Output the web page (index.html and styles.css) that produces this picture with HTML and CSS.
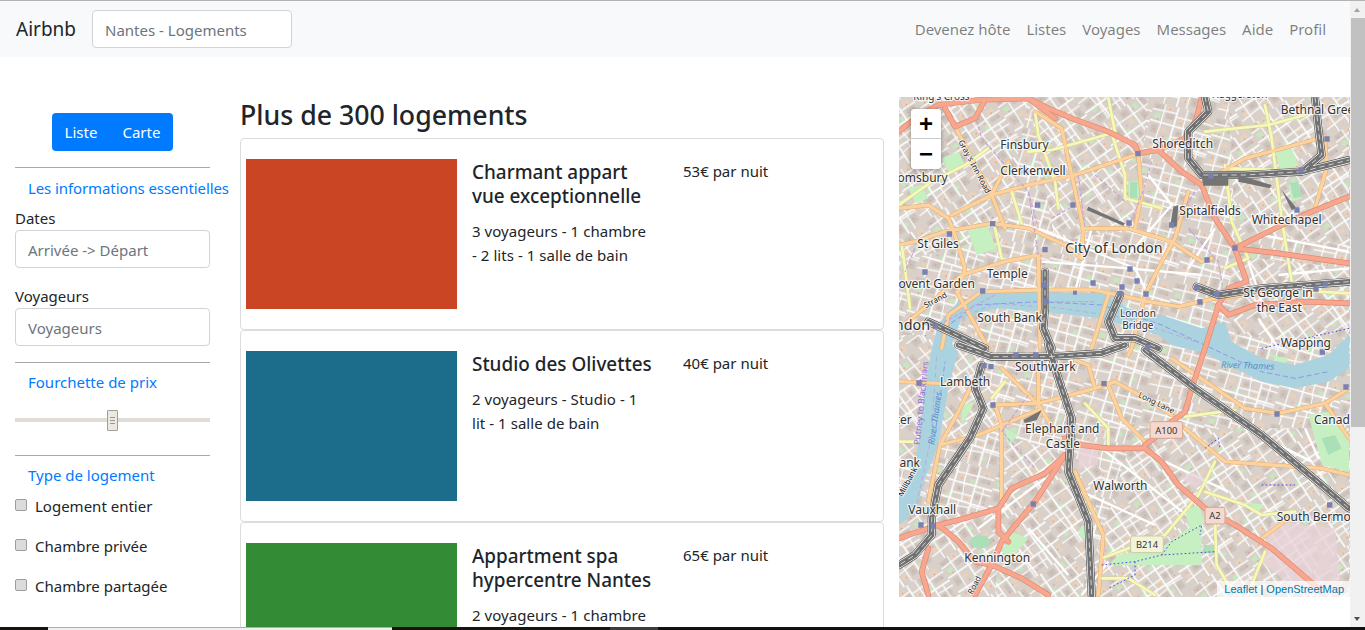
FILE: index.html
```html
<!DOCTYPE html>
<html lang="fr">
<head>
<meta charset="utf-8">
<title>Airbnb</title>
<link rel="stylesheet" href="styles.css">
</head>
<body>
<div class="shell">
  <div class="window-line"></div>
  <div class="viewport">
    <div class="page">
      <nav class="navbar">
        <a class="brand">Airbnb</a>
        <input class="field nav-search" placeholder="Nantes - Logements">
        <ul class="nav-links">
          <li>Devenez hôte</li><li>Listes</li><li>Voyages</li><li>Messages</li><li>Aide</li><li>Profil</li>
        </ul>
      </nav>
      <main class="main">
        <aside class="sidebar">
          <div class="btn-wrap">
            <div class="btn-group"><span>Liste</span><span>Carte</span></div>
          </div>
          <hr class="rule rule-first">
          <h2 class="filter-title">Les informations essentielles</h2>
          <label class="label label-first">Dates</label>
          <input class="field" placeholder="Arrivée -&gt; Départ">
          <label class="label label-next">Voyageurs</label>
          <input class="field" placeholder="Voyageurs">
          <hr class="rule">
          <h2 class="filter-title filter-title-tight">Fourchette de prix</h2>
          <div class="slider"><div class="handle"><i></i><i></i><i></i></div></div>
          <hr class="rule rule-after-slider">
          <h2 class="filter-title filter-title-tight">Type de logement</h2>
          <div class="checks">
            <label class="check"><input type="checkbox" class="box"><span>Logement entier</span></label>
            <label class="check"><input type="checkbox" class="box"><span>Chambre privée</span></label>
            <label class="check"><input type="checkbox" class="box"><span>Chambre partagée</span></label>
          </div>
        </aside>
        <section class="listing">
          <h1 class="listing-title">Plus de 300 logements</h1>
          <article class="card">
            <div class="thumb thumb-red"></div>
            <div class="card-text">
              <h3>Charmant appart vue exceptionnelle</h3>
              <p>3 voyageurs - 1 chambre - 2 lits - 1 salle de bain</p>
            </div>
            <div class="price">53€ par nuit</div>
          </article>
          <article class="card">
            <div class="thumb thumb-blue"></div>
            <div class="card-text">
              <h3>Studio des Olivettes</h3>
              <p>2 voyageurs - Studio - 1 lit - 1 salle de bain</p>
            </div>
            <div class="price">40€ par nuit</div>
          </article>
          <article class="card">
            <div class="thumb thumb-green"></div>
            <div class="card-text">
              <h3>Appartment spa hypercentre Nantes</h3>
              <p>2 voyageurs - 1 chambre - 1 lit - 1 salle de bain</p>
            </div>
            <div class="price">65€ par nuit</div>
          </article>
        </section>
        <section class="map">
          <svg class="map-art" viewBox="12 6 1353 1500" aria-hidden="true">
            <defs>
              <g id="tile">
                <rect width="190" height="170" class="m-base"/>
                <path class="m-tone1" d="M4 4h30v14H4zM44 24h26v18H44zM112 6h24v22h-24zM150 34h30v14h-30zM8 66h20v26H8zM84 70h26v16H84zM142 84h36v16h-36zM40 116h30v18H40zM108 128h20v30h-20zM156 130h26v24h-26z"/>
                <path class="m-tone2" d="M42 4h20v12H42zM84 34h16v16H84zM152 8h24v16h-24zM38 70h18v14H38zM118 92h14v20h-14zM10 128h20v16H10zM76 140h22v14H76z"/>
                <path class="m-tone3" d="M10 32h18v14H10zM120 44h14v12h-14zM60 96h16v12H60zM136 138h12v12h-12z"/>
                <path class="m-street" d="M0 56L190 62M0 108L190 118M76 0L68 170M140 0L134 170"/>
                <path class="m-lane" d="M0 22L76 20M76 30H140M140 28L190 30M36 0L34 56M104 0L102 60M34 57L30 106M104 60L108 114M72 92H136M136 76L190 80M30 107L28 170M0 146L70 142M70 132L136 128M100 116L98 170M136 122L190 126M160 120L158 170M165 62L162 118"/>
                <path class="m-dots" d="M14 14h.1M22 50h.1M52 12h.1M60 36h.1M92 46h.1M124 16h.1M130 36h.1M164 22h.1M176 44h.1M18 80h.1M50 96h.1M92 78h.1M122 104h.1M150 92h.1M174 108h.1M18 122h.1M52 126h.1M90 150h.1M118 146h.1M168 142h.1"/>
              </g>
              <pattern id="blocksA" width="190" height="170" patternUnits="userSpaceOnUse" patternTransform="rotate(14)"><use href="#tile"/></pattern>
              <pattern id="blocksB" width="190" height="170" patternUnits="userSpaceOnUse" patternTransform="rotate(-36) translate(37 21)"><use href="#tile"/></pattern>
              <pattern id="blocksC" width="190" height="170" patternUnits="userSpaceOnUse" patternTransform="rotate(52) translate(71 93)"><use href="#tile"/></pattern>
              <g id="trunk">
                <path d="M12 110L60 70 130 30 250 15 400 10 460 40 530 70 640 110 720 150 730 175 790 165 870 130 905 70 920 6"/>
                <path d="M150 40L180 95 240 70 270 15M400 10L480 70"/>
                <path d="M790 165L860 230 920 270 960 370 1020 460 1055 560 1000 580 970 630 1000 660 1080 630 1240 620 1362 625"/>
                <path d="M1020 460L1150 395 1250 350 1362 305M1020 460L1150 475 1362 505"/>
                <path d="M970 630L930 760 900 850 870 950 830 980 790 1020 750 1050"/>
                <path d="M510 1030L560 1050 640 1060 750 1060 800 1100 850 1170 930 1240 1020 1290 1130 1360 1200 1420 1280 1490"/>
                <path d="M510 1080L450 1135 350 1180 310 1240 210 1270 130 1290 70 1310 12 1330"/>
                <path d="M510 1080L420 1220 320 1340 290 1410 240 1500M290 1410L380 1450 460 1500M130 1290L190 1340 240 1400 290 1410M100 1360L80 1430 100 1500M310 1240V1310L340 1340"/>
              </g>
              <g id="primary">
                <path d="M12 450L60 440 150 410 290 385 400 400 510 450 560 490M170 360L290 300 400 270 540 240 720 180M12 340L100 330 160 370 180 420 210 520 190 590"/>
                <path d="M180 95L290 300 330 400M340 200L290 300M420 50L500 100 530 240 565 400 560 490M730 180L740 300 720 400"/>
                <path d="M560 400L700 400 830 440 920 500 950 490M880 290L840 430 800 500 750 600 710 760 700 780"/>
                <path d="M12 700L100 630 200 540 330 500 430 480M140 760L160 660 260 590 430 585 600 585 760 620 850 635 960 610 1050 600"/>
                <path d="M430 480L435 760M185 590L280 760M640 600L590 760M980 230L1050 190 1200 150 1290 125 1295 220 1260 340"/>
                <path d="M12 860L135 865 240 865M300 930L430 925 600 880 660 860 770 920 830 960M320 820L430 930 480 1010M430 800V930M600 880L580 810 540 795M640 870L680 970 750 1040"/>
                <path d="M300 930L320 990V1220M135 1050L250 1020 370 970 430 945M135 1050L100 1220M135 1050L190 950 230 870M540 1130L625 1320 610 1500"/>
                <path d="M870 1000L990 1100 1130 1110 1280 1120 1362 1140M830 790L1050 940 1150 955 1290 925 1362 880M1290 925L1362 1030M1100 1330L1180 1270"/>
              </g>
              <g id="secondary">
                <path d="M12 330L110 260 210 210 280 160M400 170L470 165 650 115 690 240 690 310 800 340M420 50L430 120 480 260 490 340M640 10L660 110M350 290L380 385"/>
                <path d="M1110 30L1130 130 1160 370 1190 560M930 110L1120 90 1230 60M990 210L1010 380 1060 490 990 520M1000 220L1140 225M1270 590L1362 595M20 450L30 520 45 640M300 400L320 490"/>
                <path d="M570 925L640 1000V1050M330 860L290 910M870 965L1020 945M960 1100L910 1200 810 1320 620 1390M930 1190L1050 1230 1100 1260 1200 1250M960 1280L965 1410 1000 1470M1110 1370L1070 1470M620 1450H700L780 1500M12 1040H60"/>
              </g>
              <g id="rail">
                <path d="M930 6L940 50 880 110V190L920 240H1050L1220 230 1280 180 1270 100 1260 6M1220 230L1362 195"/>
                <path d="M905 575L970 600 1100 580 1362 560M450 530V640L445 700 470 760M675 600L640 680 660 730H720L790 760"/>
                <path d="M100 680L270 760M190 750L290 785H460L620 775 690 750M460 750L490 850 530 970 520 1130 580 1280 590 1500"/>
                <path d="M260 810L240 880 265 940 225 1030 130 1170 110 1270V1320L60 1380 12 1410M750 765L900 880 1100 1020 1280 1170 1362 1240"/>
              </g>
            </defs>
            <rect x="12" y="6" width="1353" height="1500" fill="url(#blocksA)"/>
            <path fill="url(#blocksB)" d="M12 6H400L330 420 12 500ZM720 1000L1362 1000V1506H560ZM12 1250H400L300 1506H12ZM1000 6H1362V450L1020 420Z"/>
            <path fill="url(#blocksC)" d="M400 6H760L720 400 480 440ZM1000 480L1362 520V760L1020 720ZM330 1020L620 1120 560 1506H300ZM12 720H240L320 1000 12 1100Z"/>
            <path class="m-arterial" d="M430 400L720 520 760 600M440 500L700 520 920 540M590 400L540 590M960 400L880 520M760 240L830 330 700 480M1060 500L1100 620M1100 420L1362 470M1150 540L1362 520M1090 670L1150 760M520 800L620 760M560 1190L780 1290M620 1060L900 1280M810 1100L1000 1190M250 1300L450 1150M400 1300L520 1440M640 1400L560 1500M1050 1000L1250 1100M1230 1000L1270 1090"/>
            <path class="m-park" d="M140 190l50-20 20 40-50 20zM40 280l40-10 20 40-40 15zM215 400l60-10 30 70-60 20zM1140 170l50-10 20 50-50 20zM1180 270l30-10 10 50-30 10zM700 260l30-5 5 60-30 5zM870 1250l40-20 20 50-40 40zM810 1350l110-80v140H640l30-30zM350 1310l50 20-50 60-30-20zM1240 960l60-10 62 90v90l-80-20zM200 930l40-10-40 70zM330 1000l40 20-30 30zM560 1290l30 10-10 40-30-20zM1050 1220l60 10-20 20zM1130 780l50 10-20 30z"/>
            <path class="m-park-dark" d="M225 1340a30 20 0 1 0 60 0a30 20 0 1 0-60 0zM925 1350h40v25h-40zM705 260h22v50h-22zM1185 265l25-5 10 45-25 5zM1280 1030l40-10 20 40-40 20z"/>
            <path class="m-pinkzone" d="M1130 1280L1320 1300 1340 1500H1220L1100 1400ZM550 1040H610V1110L550 1120ZM890 1130L930 1150 900 1180 860 1150Z"/>
            <path class="m-water" d="M12 1210L50 1130 70 1050 90 880 110 760 135 680 190 620 290 590 430 590 620 595 700 640 800 660 920 700 990 680 1010 740 1100 790 1200 810 1300 780 1362 720V820L1300 860 1200 880 1100 860 1000 810 930 775 830 750 790 720 620 670 440 650 300 640 200 670 170 750 190 770 160 880 130 1050 90 1150 60 1250 12 1290Z"/>
            <path class="m-ferry" d="M150 700L240 630 430 620 620 630 800 690 950 760 1100 830 1200 850 1300 830M120 1020L150 800"/>
            <path class="m-ferry2" d="M170 680L300 625 500 640 700 670 900 740M60 1250L110 1020 125 780"/>
            <use href="#secondary" class="s-secondary-case"/>
            <use href="#primary" class="s-primary-case"/>
            <use href="#secondary" class="s-secondary"/>
            <use href="#primary" class="s-primary"/>
            <path class="m-cycle" d="M240 60L260 130 400 290 430 480M400 290L430 400M550 240L570 400M600 240L690 320M770 200L740 300 700 400M900 290L830 400M880 400L970 500 985 590M400 900L320 1010 420 1120M460 620H600M130 690L300 600M470 370L540 330M60 460L30 530"/>
            <use href="#trunk" class="s-trunk-case"/>
            <use href="#trunk" class="s-trunk"/>
            <path class="m-pathblue" d="M620 1410L720 1400 800 1380 960 1370M720 1400V1440L640 1480M800 1380L830 1340 920 1290 915 1320M930 1060L970 1030 975 1060M1100 760L1362 700M1100 1170H1200M1310 1260H1362"/>
            <use href="#rail" class="s-rail-edge"/>
            <use href="#rail" class="s-rail-white"/>
            <use href="#rail" class="s-rail-grey"/>
            <use href="#rail" class="s-rail-dash"/>
            <path class="m-railyard" d="M920 245H1000V272H925ZM835 335L850 330 845 395H825ZM385 975L440 945 425 975 390 985ZM1160 285L1205 340 1190 345ZM580 335L690 385 685 392 575 345ZM1030 240L1130 270 1125 280 1030 260Z"/>
            <path class="m-station" d="M420 322h16v16h-16zM526 322h16v16h-16zM285 378h16v16h-16zM155 409h16v16h-16zM82 523h16v16H82zM255 580h16v16h-16zM442 456h16v16h-16zM439 562h16v16h-16zM445 610h16v16h-16zM114 685h16v16h-16zM586 556h16v16h-16zM673 568h16v16h-16zM667 588h16v16h-16zM718 550h16v16h-16zM697 514h16v16h-16zM745 589h16v16h-16zM694 376h16v16h-16zM822 382h16v16h-16zM721 168h16v16h-16zM940 235h16v16h-16zM1210 217h16v16h-16zM1288 124h16v16h-16zM1198 337h16v16h-16zM1012 451h16v16h-16zM928 487h16v16h-16zM898 570h16v16h-16zM958 589h16v16h-16zM907 613h16v16h-16zM1255 574h16v16h-16zM1282 559h16v16h-16zM534 587h12v12h-12zM750 749h16v16h-16zM355 772h16v16h-16zM414 772h16v16h-16zM259 804h16v16h-16zM280 807h16v16h-16zM64 856h16v16H64zM286 922h16v16h-16zM619 858h16v16h-16zM1274 763h16v16h-16zM1345 868h16v16h-16zM1138 949h16v16h-16zM1296 1222h16v16h-16zM407 1219h16v16h-16zM70 1282h16v16H70zM106 1285h16v16h-16z"/>
            <g class="m-labels">
              <text x="55" y="14" class="l-small">King's Cross</text>
              <text x="950" y="10" class="l-small">Haggerston</text>
              <text x="316" y="163">Finsbury</text>
              <text x="316" y="241">Clerkenwell</text>
              <text x="772" y="160">Shoreditch</text>
              <text x="158" y="260" text-anchor="end">Bloomsbury</text>
              <text x="853" y="361">Spitalfields</text>
              <text x="1070" y="386">Whitechapel</text>
              <text x="67" y="459">St Giles</text>
              <text x="510" y="473" class="l-big">City of London</text>
              <text x="275" y="549">Temple</text>
              <text x="240" y="580" text-anchor="end">Covent Garden</text>
              <text x="1157" y="57">Bethnal Green</text>
              <text x="1045" y="605">St George in</text>
              <text x="1085" y="651">the East</text>
              <text x="247" y="682">South Bank</text>
              <text x="105" y="705" text-anchor="end" class="l-big">London</text>
              <text x="675" y="665" class="l-small">London</text>
              <text x="682" y="701" class="l-small">Bridge</text>
              <text x="1157" y="757">Wapping</text>
              <text x="360" y="827">Southwark</text>
              <text x="135" y="872">Lambeth</text>
              <text x="50" y="986" text-anchor="end">Westminster</text>
              <text x="390" y="1013">Elephant and</text>
              <text x="452" y="1060">Castle</text>
              <text x="595" y="1185">Walworth</text>
              <text x="40" y="1258">Vauxhall</text>
              <text x="208" y="1402">Kennington</text>
              <text x="1145" y="1279">South Bermondsey</text>
              <text x="1257" y="987">Canada Water</text>
              <text x="75" y="1116" text-anchor="end">Millbank</text>
              <text class="l-road" transform="translate(190 140) rotate(62)">Gray's Inn Road</text>
              <text class="l-road" transform="translate(92 640) rotate(-28)">Strand</text>
              <text class="l-road" transform="translate(728 905) rotate(26)">Long Lane</text>
              <text class="l-road" transform="translate(22 1207) rotate(-62)">Millbank</text>
              <text class="l-road" transform="translate(232 1500) rotate(-62)">Road</text>
              <text class="l-river" transform="translate(978 818) rotate(2)">River Thames</text>
              <text class="l-river" transform="translate(118 1050) rotate(-82)">River Thames</text>
              <text class="l-ferry" transform="translate(74 1050) rotate(-84)">Putney to Blackfriars</text>
            </g>
            <g class="m-shields">
              <rect class="sh-red" x="765" y="980" width="98" height="50" rx="6"/>
              <text x="814" y="1016">A100</text>
              <rect class="sh-red" x="930" y="1237" width="60" height="50" rx="6"/>
              <text x="960" y="1273">A2</text>
              <rect class="sh-yel" x="707" y="1323" width="98" height="50" rx="6"/>
              <text x="756" y="1359">B214</text>
            </g>
          </svg>
          <div class="zoom">
            <button class="zoom-btn">+</button>
            <button class="zoom-btn">−</button>
          </div>
          <div class="attribution"><a>Leaflet</a> | <a>OpenStreetMap</a></div>
        </section>
      </main>
    </div>
    <div class="scrollbar">
      <div class="arrow-up"></div>
      <div class="thumb-bar"></div>
      <div class="arrow-down"></div>
    </div>
  </div>
  <div class="taskbar">
    <span class="t-black t-a"></span><span class="t-light"></span><span class="t-black t-b"></span><span class="t-mid"></span><span class="t-black t-c"></span>
  </div>
</div>
</body>
</html>
```

FILE: styles.css
```css
* { box-sizing: border-box; }
html, body { margin: 0; height: 100%; overflow: hidden; }
body {
  font-family: "Noto Sans", "Open Sans", "Liberation Sans", sans-serif;
  font-size: 15px;
  line-height: 24px;
  color: #212529;
  background: #fff;
}
.shell { height: 630px; display: flex; flex-direction: column; }
.window-line { height: 1px; background: #b4b2b4; flex: none; }
.viewport { flex: 1; min-height: 0; display: flex; }
.page { width: 1350px; flex: none; overflow: hidden; }

.navbar {
  height: 56px; background: #f8f9fa;
  display: flex; align-items: center; padding: 0 16px;
}
.brand { font-size: 19px; margin-right: 16px; line-height: 30px; }
.field {
  display: block; width: 100%; height: 38px;
  padding: 7px 12px 5px; border: 1px solid #ced4da; border-radius: 4px;
  font: inherit; color: #495057; background: #fff; outline: 0;
}
.field::placeholder { color: #6c757d; opacity: 1; }
.nav-search { width: 200px; }
.nav-links {
  list-style: none; margin: 0 0 0 auto; padding: 0; display: flex;
  color: rgba(0,0,0,.5); letter-spacing: -.02px;
}
.nav-links li { padding: 8px; }

.main { display: flex; padding-top: 40px; }
.sidebar { width: 195px; margin: 16px 30px 0 15px; flex: none; }
.btn-wrap { display: flex; justify-content: center; }
.btn-group {
  display: flex; background: #007bff; color: #fff; border-radius: 4px;
  height: 38px; align-items: center;
}
.btn-group span { padding: 0 12.5px; }
.rule { border: 0; border-top: 1px solid #a9a9a9; margin: 16px 0 0; }
.filter-title {
  font: inherit; color: #007bff; margin: 8px 0 0; padding-left: 13px;
  white-space: nowrap; letter-spacing: -.1px;
}
.filter-title-tight { margin-top: 7px; letter-spacing: 0; }
.label { display: block; }
.label-first { margin-top: 6px; }
.label-next { margin-top: 16px; }
.slider {
  position: relative; height: 4px; background: #e1dcd5; margin-top: 24px;
}
.handle {
  position: absolute; left: 92px; top: -8px; width: 11px; height: 21px;
  background: #ece9e4; border: 1px solid #a39d94; border-radius: 1px;
  display: flex; flex-direction: column; justify-content: center; gap: 2px; padding: 0 2px;
}
.handle i { display: block; height: 1px; background: #9c978f; }
.rule-after-slider { margin-top: 33px; }
.checks { margin-top: 7px; display: flex; flex-direction: column; gap: 16px; }
.check { display: flex; align-items: flex-start; height: 24px; }
.check span { margin-left: 8px; }
.box {
  appearance: none; width: 12px; height: 12px; margin: 5px 0 0;
  background: #dcdcdc; border: 1px solid #9d9d9d; border-radius: 2px; flex: none;
}

.listing { width: 644px; flex: none; }
.listing-title {
  font-size: 26.7px; font-weight: 500; line-height: 34px; margin: 1px 0 6px;
  white-space: nowrap;
}
.card {
  height: 192px; border: 1px solid #dcdcdc; border-radius: 4px;
  padding: 20px 5px; display: flex; background: #fff;
}
.thumb { width: 211px; height: 150px; flex: none; }
.thumb-red { background: #c94524; }
.thumb-blue { background: #1c6c8c; }
.thumb-green { background: #348b36; }
.card-text { width: 180px; margin-left: 15px; flex: none; padding-top: 1px; }
.card-text h3 { font-size: 18.9px; font-weight: 500; line-height: 24px; margin: 0 0 11px; }
.card-text p { margin: 0; letter-spacing: .05px; }
.price { margin-left: 31px; }

.map {
  position: relative; width: 451px; height: 500px; margin-left: 15px; flex: none;
  overflow: hidden; background: #ddd;
}
.map-art { display: block; width: 451px; height: 500px; }
.zoom {
  position: absolute; left: 12px; top: 12px; width: 30px;
  background: #fff; border-radius: 4px; overflow: hidden;
  box-shadow: 0 1px 5px rgba(0,0,0,.4);
}
.zoom-btn {
  display: block; width: 30px; height: 30px; padding: 0; border: 0;
  border-bottom: 1px solid #ccc; background: #fff; color: #000;
  font: bold 24px/30px "Liberation Sans", Arial, sans-serif;
}
.zoom-btn:last-child { border-bottom: 0; }
.attribution {
  position: absolute; right: 0; bottom: 0; padding: 0 6px 0 7px; height: 16px;
  background: rgba(255,255,255,.7); color: #333;
  font: 11px/16px "Liberation Sans", Arial, sans-serif;
}
.attribution a { color: #0078a8; }

/* map art */
.m-base { fill: #d8d0c9; }
.m-tone1 { fill: #cbc3bc; }
.m-tone2 { fill: #e6d2bf; }
.m-tone3 { fill: #c6e8bf; }
.m-street { fill: none; stroke: #fff; stroke-width: 5; }
.m-lane { fill: none; stroke: #fff; stroke-width: 3.5; }
.m-dots { fill: none; stroke: #e98a7c; stroke-width: 4; stroke-linecap: round; }
.m-arterial { fill: none; stroke: #fff; stroke-width: 7; }
.m-park { fill: #c6f0c2; }
.m-park-dark { fill: #aadfb8; }
.m-pinkzone { fill: #e8d3da; opacity: .8; }
.m-water { fill: #aad3df; }
.m-ferry { fill: none; stroke: #7a7be8; stroke-width: 2.5; stroke-dasharray: 16 8; opacity: .8; }
.m-ferry2 { fill: none; stroke: #c39bd6; stroke-width: 2.5; stroke-dasharray: 14 10; opacity: .9; }
.m-cycle { fill: none; stroke: #c8a3d6; stroke-width: 3.5; stroke-dasharray: 12 6; }
.m-pathblue { fill: none; stroke: #2a2ae8; stroke-width: 2.5; stroke-dasharray: 5 7; }
#trunk, #primary, #secondary, #rail { fill: none; stroke-linejoin: round; stroke-linecap: round; }
.s-trunk-case { stroke: #dd8a72; stroke-width: 17; }
.s-trunk { stroke: #f9a68e; stroke-width: 13; }
.s-primary-case { stroke: #e5ac6c; stroke-width: 13; }
.s-primary { stroke: #fcd29f; stroke-width: 10; }
.s-secondary-case { stroke: #d6d68c; stroke-width: 11; }
.s-secondary { stroke: #f6f9b8; stroke-width: 8; }
.s-rail-edge { stroke: #555; stroke-width: 24; }
.s-rail-white { stroke: #fff; stroke-width: 20; }
.s-rail-grey { stroke: #717171; stroke-width: 16; }
.s-rail-dash { stroke: #fff; stroke-width: 2; stroke-dasharray: 14 14; stroke-linecap: butt; }
.m-railyard { fill: #747474; }
.m-station { fill: #7981b1; }
.m-labels text {
  font: 36px "Noto Sans", sans-serif; fill: #333;
  stroke: rgba(255,255,255,.75); stroke-width: 7; paint-order: stroke; stroke-linejoin: round;
}
.m-labels .l-big { font-size: 43px; }
.m-labels .l-small { font-size: 30px; }
.m-labels .l-road { font-size: 24px; fill: #222; stroke-width: 5; }
.m-labels .l-river { font-size: 27px; font-style: italic; fill: #5a8fce; stroke: rgba(170,211,223,.6); stroke-width: 3; }
.m-labels .l-ferry { font-size: 26px; fill: #8f6fe0; stroke: none; }
.m-shields text { font: 28px "Noto Sans", sans-serif; fill: #333; text-anchor: middle; }
.sh-red { fill: #f5d9cf; stroke: #d6a596; stroke-width: 3; }
.sh-yel { fill: #f2f3da; stroke: #c9c99c; stroke-width: 3; }

/* scrollbar and window chrome */
.scrollbar { width: 15px; flex: none; background: #f1f1f1; position: relative; }
.thumb-bar { position: absolute; top: 17px; left: 1px; right: 0; height: 409px; background: #c1c1c1; }
.arrow-up, .arrow-down {
  position: absolute; left: 4px; width: 0; height: 0;
  border-left: 3.5px solid transparent; border-right: 3.5px solid transparent;
}
.arrow-up { top: 7px; border-bottom: 4px solid #a3a3a3; }
.arrow-down { bottom: 6px; border-top: 4px solid #505050; }
.taskbar { height: 3px; flex: none; display: flex; background: #111; }
.t-black { background: #17130f; }
.t-a { width: 48px; }
.t-light { width: 344px; background: #f0f0f0; border-top: 1px solid #adadad; }
.t-b { width: 218px; }
.t-mid { width: 48px; background: #3c3c3c; }
.t-c { flex: 1; background: #111; }
```
